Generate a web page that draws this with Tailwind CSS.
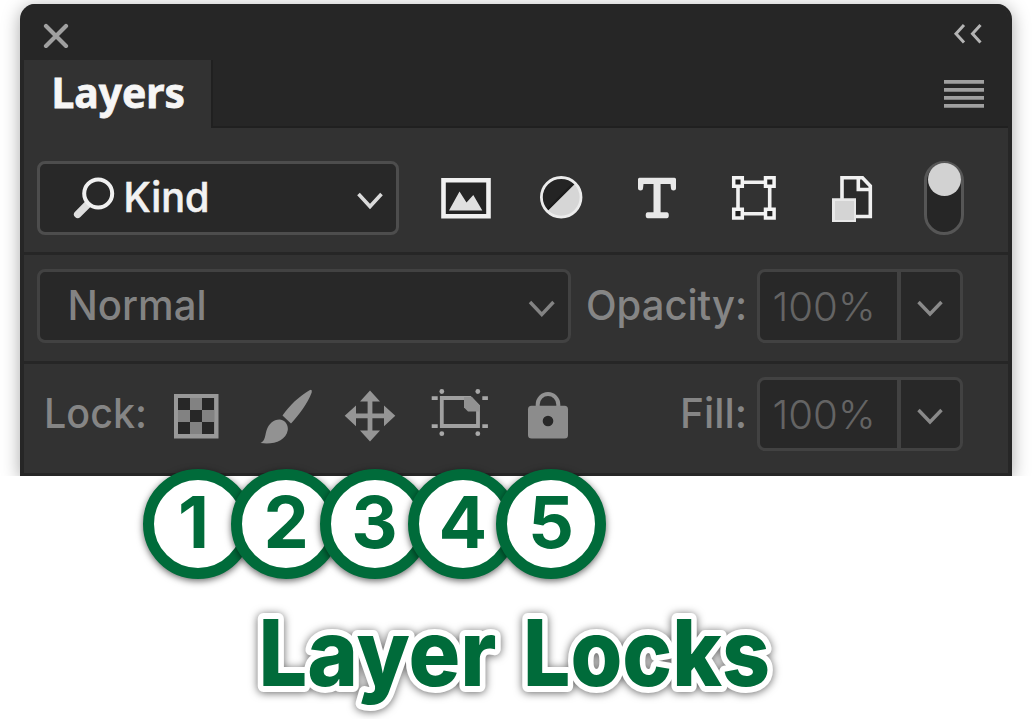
<!DOCTYPE html>
<html lang="en">
<head>
<meta charset="utf-8">
<title>Layer Locks</title>
<script src="https://cdn.jsdelivr.net/npm/@tailwindcss/browser@4"></script>
</head>
<body class="h-[719px] w-[1032px] overflow-hidden bg-white font-['Inter',sans-serif]">
<div class="h-[476px] overflow-hidden px-5 pt-1">
<section class="h-[472px] overflow-hidden rounded-t-[15px] border-x-4 border-[#262626] bg-[#323232] shadow-[0_3px_18px_rgba(0,0,0,0.35)]">
  <header class="flex h-14 items-center justify-between bg-[#262626] pr-[24px] pl-[16px]">
    <svg class="h-8 w-8" viewBox="40 16 32 32" fill="none" stroke="#a0a0a0" stroke-width="4.2" stroke-linecap="round"><path d="M46 26 66 46M66 26 46 46"/></svg>
    <svg class="h-8 w-8" viewBox="952 16 32 32" fill="none" stroke="#b4b4b4" stroke-width="3"><path d="M964 25 956 33.7 964 42.5M980.5 25 972.5 33.7 980.5 42.5"/></svg>
  </header>
  <div class="flex h-[68px] items-stretch justify-between border-b-2 border-[#202020] bg-[#262626] pr-[24px]">
    <div class="-mb-[2px] flex w-[189px] border-r-2 border-[#202020] bg-[#323232]">
      <svg class="h-[68px] w-[187px]" viewBox="24 60 187 68"><text x="51.5" y="108" textLength="133.5" lengthAdjust="spacingAndGlyphs" font-family="Noto Sans, sans-serif" font-weight="700" font-size="41.5" fill="#f6f6f6" stroke="#f6f6f6" stroke-width="0.8">Layers</text></svg>
    </div>
    <svg class="h-[66px] w-10" viewBox="944 60 40 66" fill="#a0a0a0"><path d="M944 80h40v3.7h-40zM944 88h40v3.7h-40zM944 96h40v3.7h-40zM944 104h40v3.7h-40z"/></svg>
  </div>

  <div class="flex h-[127px] items-center border-b-3 border-[#262626] pt-4 pl-[13px]">
    <div class="mb-px flex h-[74px] w-[362px] items-center rounded-[8px] border-[3px] border-[#4d4d4d] bg-[#282828]">
      <svg class="h-[60px] w-[356px]" viewBox="40 168 356 60">
        <path d="M89 203 77.7 214.3" stroke="#dedede" stroke-width="7.5" stroke-linecap="round"/>
        <circle cx="98.2" cy="193.5" r="14" fill="#282828" stroke="#f0f0f0" stroke-width="4"/>
        <text x="123.5" y="212" textLength="86" lengthAdjust="spacingAndGlyphs" font-weight="500" font-size="41" fill="#f2f2f2" stroke="#f2f2f2" stroke-width="0.6">Kind</text>
        <path d="M358.5 194 370 206.500 381.500 194" fill="none" stroke="#dadada" stroke-width="3.6"/>
      </svg>
    </div>
    <svg class="ml-[42px] h-[60px] w-[50px]" viewBox="441 168 50 60"><path d="M443.500 180.300h45v36h-45z" fill="#242424" stroke="#f0f0f0" stroke-width="4.600"/><path d="M449 210.500 459.500 191.500 466.500 202.500 473.300 195 482.300 210.500z" fill="#e0e0e0"/></svg>
    <svg class="ml-[48px] h-[60px] w-[44px]" viewBox="539 168 44 60"><circle cx="561.200" cy="197.300" r="20" fill="#242424"/><path d="M575.500 183.300A20 20 0 0 1 547 211.500z" fill="#d6d6d6"/><path d="M574 183 547.500 209.500" stroke="#1c1c1c" stroke-width="2"/><circle cx="561.200" cy="197.300" r="19.800" fill="none" stroke="#ececec" stroke-width="2.800"/></svg>
    <svg class="ml-[54px] h-[60px] w-[40px]" viewBox="637 168 40 60"><path d="M639.500 177.700h35q1.500 0 1.500 1.500v9.300q0 2-2.500 2t-2.500-2l-.5-4.500H660.600v28.300h6.200q2 0 2 3t-2 3H647.700q-2 0-2-3t2-3h5.800V184H643.500l-.5 4.500q0 2-2.500 2t-2.500-2v-9.300q0-1.500 1.500-1.500z" fill="#e8e8e8"/></svg>
    <svg class="ml-[54px] h-[60px] w-[46px]" viewBox="731 168 46 60"><path d="M738 182.200h31.700v31.500H738z" fill="none" stroke="#f0f0f0" stroke-width="3.600"/><g fill="#222" stroke="#f4f4f4" stroke-width="3.500"><path d="M733.700 177.700h8.600v8.600h-8.600zM765.500 177.700h8.600v8.600h-8.600zM733.700 209.300h8.600v8.600h-8.600zM765.500 209.300h8.600v8.600h-8.600z"/></g></svg>
    <svg class="ml-[54px] h-[60px] w-[42px]" viewBox="831 168 42 60"><path d="M842 177.700H862.500L870.300 186V216.500H842z" fill="#2c2c2c" stroke="#f0f0f0" stroke-width="3.600"/><path d="M858.300 178V189.500H870" fill="none" stroke="#f0f0f0" stroke-width="3.600"/><path d="M832 198.300h24v23.700h-24z" fill="#e8e8e8"/><path d="M835 201h19v19h-19z" fill="#d4d4d4"/></svg>
    <div class="mb-px ml-[51px] flex h-[74px] w-[40px] justify-center rounded-full border-[3px] border-[#565656] bg-[#262626]"><div class="-mt-px h-[33px] w-[33px] shrink-0 rounded-full bg-[#d2d2d2]"></div></div>
  </div>

  <div class="flex h-[109px] items-center border-b-3 border-[#262626] pb-[4px] pl-[13px]">
    <div class="mb-px flex h-[74px] w-[534px] items-center rounded-[8px] border-[3px] border-[#424242] bg-[#282828]">
      <svg class="h-[60px] w-[528px]" viewBox="40 276 528 60"><text x="67.5" y="320" textLength="139" lengthAdjust="spacingAndGlyphs" font-weight="500" font-size="41" fill="#838383">Normal</text><path d="M530 302 541.800 314.500 553.500 302" fill="none" stroke="#838383" stroke-width="3.400"/></svg>
    </div>
    <svg class="ml-[13px] h-[60px] w-[165px] overflow-visible" viewBox="584 276 165 60"><text x="586" y="320" textLength="161" lengthAdjust="spacingAndGlyphs" font-weight="500" font-size="41" fill="#858585">Opacity:</text></svg>
    <div class="mb-px ml-[8px] flex h-[74px] w-[206px] items-center rounded-[8px] border-[3px] border-[#424242] bg-[#282828]">
      <svg class="h-[68px] w-[141px] border-r-[4px] border-[#424242]" viewBox="760 272 137 68"><text x="772.500" y="320.500" textLength="103" lengthAdjust="spacingAndGlyphs" font-weight="300" font-size="40" fill="#646464">100%</text></svg>
      <svg class="h-[60px] w-[59px]" viewBox="901 276 59 60"><path d="M918.500 302 930 314 941.500 302" fill="none" stroke="#8a8a8a" stroke-width="3.400"/></svg>
    </div>
  </div>

  <div class="flex h-[112px] items-center border-b-3 border-[#262626] pb-[9px] pl-[18px]">
    <svg class="h-[60px] w-[107px] overflow-visible" viewBox="42 384 107 60"><text x="44" y="428" textLength="103" lengthAdjust="spacingAndGlyphs" font-weight="500" font-size="41" fill="#858585">Lock:</text></svg>
    <svg class="ml-[25px] h-[60px] w-[45px]" viewBox="174 384 45 60"><path d="M174 394h44.500v44.500H174z" fill="#989898"/><path d="M178 398h36.500v36H178z" fill="#828282"/><path d="M178 398h12v12h-12zM202 398h12v12h-12zM190 410h12v12h-12zM178 422h12v12h-12zM202 422h12v12h-12z" fill="#272727"/></svg>
    <svg class="ml-[41px] h-[60px] w-[54px]" viewBox="260 384 54 60" fill="#929292"><path d="M309.500 390.300Q312.500 388.500 311.700 392.500C308 403 298 416 291 423.500L282.500 415.500C289 406 299 396.500 309.500 390.300z"/><path d="M279.500 419.500C284 419.500 288.500 424 287.800 430C286 441 273 445 260.500 443C265.500 440.500 265 435 266.500 430.500C268.500 424 273.500 419.500 279.500 419.500z"/></svg>
    <svg class="ml-[30px] h-[60px] w-[52px]" viewBox="344 384 52 60" fill="#959595"><path d="M370 390.500 380 401.500H372.400V413.500H384V405.500L395.300 415.800 384 426.200V418.200H372.400V430.500H380L370 441.500 360 430.500H367.600V418.200H356V426.200L344.700 415.800 356 405.500V413.500H367.600V401.500H360z"/></svg>
    <svg class="ml-[35px] h-[60px] w-[58px]" viewBox="431 384 58 60"><path d="M441.800 398H470L478 406V426H441.800z" fill="none" stroke="#a0a0a0" stroke-width="3.800"/><path d="M464 397h8L479.500 405.500V411.500H468L464 407.500z" fill="#929292"/><g fill="#a8a8a8"><circle cx="441.800" cy="391.500" r="2.400"/><circle cx="477.800" cy="391.500" r="2.400"/><circle cx="441.800" cy="433.700" r="2.400"/><circle cx="477.800" cy="433.700" r="2.400"/><path d="M431.700 396.200h6v3.800h-6zM482.300 396.200h5.600v3.800h-5.600zM431.700 424.200h6v3.800h-6zM482.300 424.200h5.600v3.800h-5.600z"/></g></svg>
    <svg class="ml-[38px] h-[60px] w-[42px]" viewBox="527 384 42 60"><path d="M537.700 407V404.500A10.300 10.500 0 0 1 558.300 404.500V407" fill="none" stroke="#929292" stroke-width="4"/><rect x="528" y="405.700" width="40" height="32.800" rx="3.500" fill="#8c8c8c"/><circle cx="548" cy="421" r="5.300" fill="#282828"/></svg>
    <svg class="ml-[109px] h-[60px] w-[71px] overflow-visible" viewBox="678 384 71 60"><text x="680" y="428" textLength="67" lengthAdjust="spacingAndGlyphs" font-weight="500" font-size="41" fill="#858585">Fill:</text></svg>
    <div class="mb-px ml-[8px] flex h-[74px] w-[206px] items-center rounded-[8px] border-[3px] border-[#424242] bg-[#282828]">
      <svg class="h-[68px] w-[141px] border-r-[4px] border-[#424242]" viewBox="760 380 137 68"><text x="772.500" y="428.500" textLength="103" lengthAdjust="spacingAndGlyphs" font-weight="300" font-size="40" fill="#646464">100%</text></svg>
      <svg class="h-[60px] w-[59px]" viewBox="901 384 59 60"><path d="M918.500 410 930 422 941.500 410" fill="none" stroke="#8a8a8a" stroke-width="3.400"/></svg>
    </div>
  </div>
</section>
</div>

<!-- Numbered markers overlapping the panel's lower edge -->
<div class="relative -mt-[7px] flex pl-[143px] text-[72px] leading-none font-bold text-[#006b3a]">
  <div class="flex h-[110px] w-[110px] items-center justify-center rounded-full border-[11px] border-[#006b3a] bg-white shadow-[0_2px_7px_rgba(0,0,0,0.6)]"><span class="pr-[9px] pb-[4px]">1</span></div>
  <div class="-ml-[21.75px] flex h-[110px] w-[110px] items-center justify-center rounded-full border-[11px] border-[#006b3a] bg-white shadow-[0_2px_7px_rgba(0,0,0,0.6)]"><span class="pb-[4px]">2</span></div>
  <div class="-ml-[21.75px] flex h-[110px] w-[110px] items-center justify-center rounded-full border-[11px] border-[#006b3a] bg-white shadow-[0_2px_7px_rgba(0,0,0,0.6)]"><span class="pb-[4px]">3</span></div>
  <div class="-ml-[21.75px] flex h-[110px] w-[110px] items-center justify-center rounded-full border-[11px] border-[#006b3a] bg-white shadow-[0_2px_7px_rgba(0,0,0,0.6)]"><span class="pb-[4px]">4</span></div>
  <div class="-ml-[21.75px] flex h-[110px] w-[110px] items-center justify-center rounded-full border-[11px] border-[#006b3a] bg-white shadow-[0_2px_7px_rgba(0,0,0,0.6)]"><span class="pb-[4px]">5</span></div>
</div>

<h1><svg class="h-[140px] w-[1032px] drop-shadow-[0_1px_4px_rgba(0,0,0,0.6)]" viewBox="0 579 1032 140" font-weight="800" font-size="92" fill="#006b3a" stroke="#fff" stroke-width="12" stroke-linejoin="round" paint-order="stroke"><text x="258.500" y="686" textLength="238" lengthAdjust="spacingAndGlyphs">Layer</text><text x="523" y="686" textLength="247" lengthAdjust="spacingAndGlyphs">Locks</text></svg></h1>
</body>
</html>
